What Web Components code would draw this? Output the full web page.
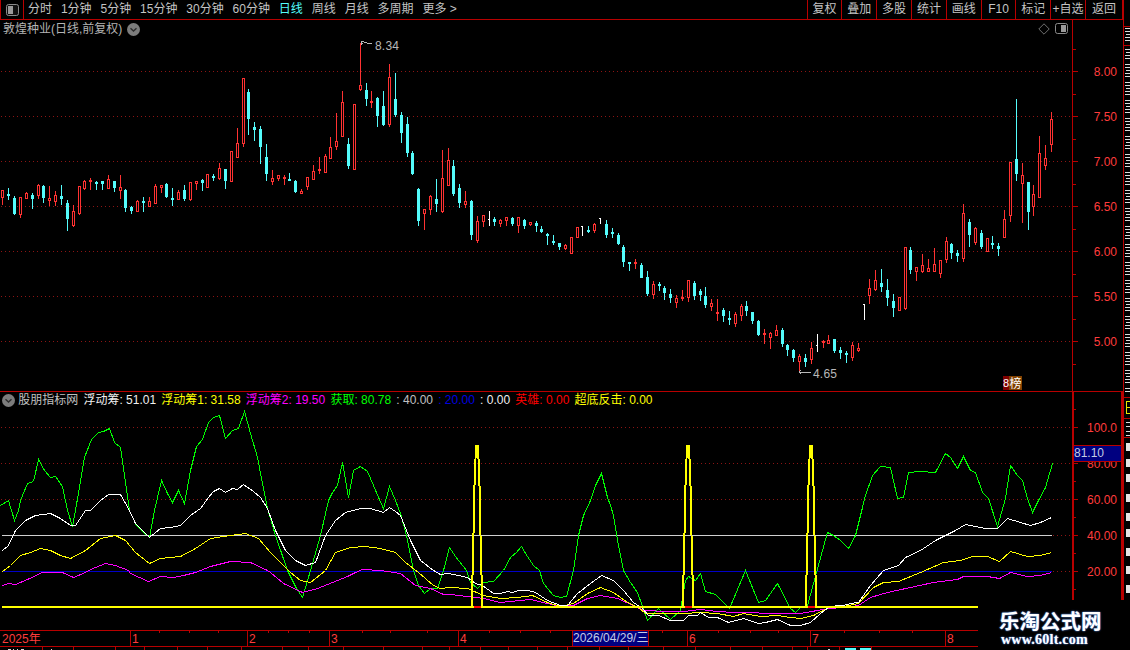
<!DOCTYPE html>
<html lang="zh">
<head>
<meta charset="utf-8">
<title>K线</title>
<style>
  html, body { margin: 0; background: #000; }
  body { overflow: hidden; font: 12px "Liberation Sans", "Noto Sans CJK SC", sans-serif; color: #c0c0c0; }
</style>
</head>
<body>
<kl-app>
  <kl-toolbar>
    <kl-period>分时</kl-period>
    <kl-period>1分钟</kl-period>
    <kl-period>5分钟</kl-period>
    <kl-period>15分钟</kl-period>
    <kl-period>30分钟</kl-period>
    <kl-period>60分钟</kl-period>
    <kl-period active>日线</kl-period>
    <kl-period>周线</kl-period>
    <kl-period>月线</kl-period>
    <kl-period>多周期</kl-period>
    <kl-period>更多 &gt;</kl-period>
    <kl-action slot="actions">复权</kl-action>
    <kl-action slot="actions">叠加</kl-action>
    <kl-action slot="actions">多股</kl-action>
    <kl-action slot="actions">统计</kl-action>
    <kl-action slot="actions">画线</kl-action>
    <kl-action slot="actions">F10</kl-action>
    <kl-action slot="actions">标记</kl-action>
    <kl-action slot="actions">+自选</kl-action>
    <kl-action slot="actions">返回</kl-action>
  </kl-toolbar>
  <kl-price-panel>敦煌种业(日线,前复权)</kl-price-panel>
  <kl-indicator-panel>
    <kl-legend color="#c0c0c0">股朋指标网</kl-legend>
    <kl-legend color="#f0f0f0">浮动筹: 51.01</kl-legend>
    <kl-legend color="#ffff00">浮动筹1: 31.58</kl-legend>
    <kl-legend color="#ff00ff">浮动筹2: 19.50</kl-legend>
    <kl-legend color="#00ff00">获取: 80.78</kl-legend>
    <kl-legend color="#c0c0c0">: 40.00</kl-legend>
    <kl-legend color="#0000e0">: 20.00</kl-legend>
    <kl-legend color="#f0f0f0">: 0.00</kl-legend>
    <kl-legend color="#ff0000">英雄: 0.00</kl-legend>
    <kl-legend color="#ffff00">超底反击: 0.00</kl-legend>
  </kl-indicator-panel>
  <kl-date-axis>2026/04/29/三</kl-date-axis>
  <kl-tab-row></kl-tab-row>
  <kl-side-column slot="side"></kl-side-column>
  <kl-watermark slot="mark">
    <span>乐淘公式网</span>
    <span slot="url">www.60lt.com</span>
  </kl-watermark>
</kl-app>

<script>
const SVG_NS = 'http://www.w3.org/2000/svg';
const LINE_RED = '#b80000';
const LABEL_RED = '#ff3c3c';
const CYAN = '#54fcfc';
const CANDLE_RED = '#ff3232';

/** small helper for svg nodes */
function el(name, attrs, text) {
    const node = document.createElementNS(SVG_NS, name);
    for (const key in attrs) node.setAttribute(key, attrs[key]);
    if (text !== undefined) node.textContent = text;
    return node;
}

/** svg canvas using page coordinates, so numbers below read like the screen */
function canvas(x, y, w, h) {
    const svg = el('svg', { width: w, height: h, viewBox: `${x} ${y} ${w} ${h}`, 'shape-rendering': 'crispEdges' });
    svg.style.display = 'block';
    return svg;
}

function px(svg, x, y, w, h, fill) {
    svg.append(el('rect', { x, y, width: w, height: h, fill }));
}

function dotted(svg, y, x1, x2) {
    for (let x = x1; x < x2; x += 4) px(svg, x, y, 1, 1, '#8c1414');
}

/* candles: [center, wick top, body top, body bottom, wick bottom, type], in 3x crop coordinates */
const CANDLE_SETS = [
    { ox: 0, oy: 60, rows: [
        [7,390,390,413,435,'r'],[25,384,402,408,420,'c'],[43,408,414,462,465,'c'],[61,411,411,464,474,'r'],
        [79,396,399,417,417,'r'],[97,400,405,417,447,'c'],[115,373,375,408,417,'r'],[130,376,378,414,429,'c'],
        [148,378,415,423,439,'r'],[166,393,405,426,438,'r'],[184,375,408,417,435,'c'],[202,420,429,477,513,'c'],
        [220,435,454,498,501,'r'],[238,378,378,462,465,'r'],[253,360,363,387,390,'r'],[271,354,360,366,390,'r'],
        [289,363,366,369,390,'c'],[307,363,363,372,390,'c'],[325,345,357,387,387,'r'],[343,363,363,384,396,'c'],
        [361,345,381,393,417,'r'],[376,387,390,444,456,'c'],[394,438,441,453,462,'c'],[412,420,423,456,456,'r'],
        [430,411,423,429,456,'c'],[448,411,423,441,441,'r'],[466,372,378,432,432,'r'],[484,375,376,384,399,'r'],
        [499,369,372,411,414,'c'],[517,384,414,417,438,'c'],[535,390,396,420,420,'r'],[553,375,390,417,423,'c'],
        [571,366,366,420,423,'r'],[589,363,363,372,390,'r'],[607,357,360,369,393,'c'],[622,342,342,384,384,'r'],
        [640,342,348,351,363,'c'],[658,309,324,357,360,'r'],[676,327,327,363,387,'c'],[694,273,273,366,366,'r'],
        [712,204,249,294,294,'r'],[730,54,54,251,261,'r'],[745,87,96,177,225,'c'],[763,186,201,210,243,'c'],
        [781,198,207,261,312,'c'],[799,252,291,342,363,'c'],[817,330,354,366,375,'r'],[835,345,345,357,363,'r'],
        [853,345,351,357,375,'r'],[868,339,357,360,363,'c'],[886,360,363,396,399,'c']
    ] },
    { ox: 300, oy: 30, rows: [
        [4,477,483,492,492,'r'],[22,441,441,471,480,'r'],[40,405,423,450,450,'r'],[58,381,417,423,432,'r'],
        [76,372,378,429,429,'r'],[91,321,351,387,387,'r'],[109,249,333,351,360,'r'],[127,183,216,321,321,'r'],
        [145,324,342,408,417,'c'],[163,222,222,420,420,'r'],[181,39,165,180,183,'r'],[199,159,180,207,228,'c'],
        [214,183,213,219,234,'r'],[232,201,204,258,291,'c'],[250,183,228,285,288,'c'],[268,102,141,285,291,'r'],
        [286,129,207,255,261,'c'],[304,246,255,309,339,'c'],[322,261,282,369,381,'c'],[337,363,369,432,435,'c'],
        [355,474,477,573,588,'c'],[373,537,537,552,600,'r'],[391,495,498,540,555,'r'],[409,447,507,522,546,'c'],
        [427,360,444,546,549,'r'],[445,354,390,468,468,'r'],[460,390,408,492,498,'c'],[478,462,474,519,534,'c'],
        [496,483,513,525,534,'r'],[514,510,513,615,630,'c'],[532,558,573,633,639,'r'],[550,555,555,576,591,'r'],
        [568,543,567,570,588,'w'],[583,561,567,576,588,'c'],[601,567,570,582,591,'r'],[619,561,561,573,588,'r'],
        [637,561,564,582,588,'c'],[655,561,561,588,609,'r'],[673,567,570,588,597,'c'],[691,576,576,585,588,'r'],
        [709,573,579,588,606,'c'],[724,588,597,606,609,'c'],[742,609,612,618,645,'c'],[760,615,633,636,645,'c'],
        [778,639,639,651,660,'c'],[796,642,645,657,660,'r'],[814,621,621,672,672,'r'],[832,591,591,624,624,'r'],
        [847,588,588,591,618,'w'],[865,588,600,603,609,'c'],[883,579,582,603,609,'r']
    ] },
    { ox: 600, oy: 210, rows: [
        [1,25,25,28,42,'w'],[19,30,42,75,84,'c'],[37,54,66,72,84,'c'],[55,69,75,102,105,'c'],[70,105,111,156,171,'c'],
        [88,156,156,159,183,'c'],[106,147,156,159,177,'r'],[124,159,165,204,204,'c'],[142,183,201,252,258,'c'],
        [160,213,222,255,267,'r'],[178,216,222,228,243,'c'],[193,228,234,249,270,'c'],[211,237,252,264,279,'c'],
        [229,255,264,279,294,'r'],[247,240,261,267,273,'r'],[265,210,210,264,276,'r'],[283,213,219,258,270,'c'],
        [301,237,243,255,273,'c'],[316,231,258,285,294,'c'],[334,267,279,291,303,'r'],[352,267,306,312,333,'r'],
        [370,294,300,318,336,'c'],[388,303,324,327,345,'c'],[406,306,312,342,351,'r'],[424,282,288,318,333,'r'],
        [439,273,288,303,318,'c'],[457,306,306,333,342,'c'],[475,330,333,375,378,'c'],[493,357,369,375,402,'r'],
        [511,366,369,384,417,'r'],[529,345,360,378,378,'r'],[547,354,360,402,411,'c'],[562,402,405,420,438,'c'],
        [580,417,420,444,456,'c'],[598,432,438,456,489,'r'],[616,432,444,456,471,'c'],[634,396,414,450,462,'r'],
        [652,372,405,408,426,'w'],[670,390,393,399,414,'r'],[685,375,390,402,402,'r'],[703,387,387,423,429,'c'],
        [721,411,420,429,447,'c'],[739,423,429,435,459,'c'],[757,396,405,444,453,'r'],[775,399,414,423,426,'r']
    ] },
    { ox: 850, oy: 90, rows: [
        [42,642,642,645,690,'w'],[58,567,594,618,642,'r'],[76,540,570,600,603,'r'],[94,537,579,591,606,'c'],
        [112,567,600,624,648,'c'],[130,612,633,654,681,'c'],[148,621,621,663,663,'r'],[166,471,471,657,660,'r'],
        [181,471,480,540,552,'c'],[199,531,531,546,573,'r'],[217,492,525,546,549,'r'],[235,507,534,546,546,'r'],
        [253,474,522,546,546,'r'],[271,510,510,552,564,'r'],[289,441,453,510,519,'r'],[304,459,462,489,507,'c'],
        [322,480,489,498,516,'c'],[340,342,369,507,516,'r'],[358,387,396,435,471,'c'],[376,411,414,459,465,'r'],
        [394,420,429,471,477,'c'],[412,444,444,486,486,'r'],[427,438,459,462,477,'c'],[445,459,468,477,498,'c'],
        [463,360,387,444,444,'r'],[481,216,216,378,396,'r'],[499,27,207,252,273,'c'],[517,219,255,282,399,'r'],
        [535,276,276,366,420,'c'],[550,285,312,351,378,'r'],[568,138,189,324,324,'r'],[586,165,204,228,240,'r'],
        [604,66,87,165,186,'r']
    ] }
];

/* indicator curves, page pixels */
const GREEN = [[0,505],[8,500],[14,520],[18,510],[20,500],[27,483],[33,481],[38,459],[44,470],[50,477],[55,476],[62,486],[67,510],[72,526],[75,510],[84,457],[91,439],[98,432],[103,431],[109,428],[114,442],[120,447],[129,510],[136,525],[149,537],[154,510],[161,480],[167,493],[172,502],[178,490],[184,503],[190,470],[196,446],[202,439],[208,422],[213,417],[219,415],[225,438],[232,430],[238,428],[244,411],[250,433],[257,457],[262,483],[267,508],[275,535],[287,570],[296,588],[302,597],[310,570],[320,535],[328,500],[332,492],[337,485],[342,462],[348,497],[353,470],[360,466],[367,471],[373,485],[378,497],[383,508],[389,486],[395,500],[400,513],[406,535],[413,570],[418,585],[424,593],[430,588],[437,588],[443,570],[449,547],[455,556],[466,570],[470,582],[477,588],[483,582],[493,581],[503,570],[510,557],[516,552],[521,546],[527,556],[533,565],[539,570],[543,583],[553,595],[560,597],[566,596],[573,570],[578,535],[583,515],[590,500],[595,485],[601,473],[607,497],[610,505],[613,515],[618,545],[623,570],[630,582],[637,592],[647,620],[658,608],[670,619],[680,610],[685,580],[688,576],[695,580],[700,573],[705,591],[715,594],[729,608],[745,570],[758,602],[765,600],[777,583],[790,608],[795,612],[800,607],[807,605],[822,550],[827,532],[833,535],[840,540],[848,548],[855,535],[865,495],[872,475],[880,466],[890,467],[897,498],[903,497],[908,472],[920,471],[935,472],[945,453],[950,457],[957,468],[963,456],[970,470],[975,472],[982,492],[988,498],[997,526],[1005,498],[1010,465],[1017,475],[1022,480],[1027,498],[1032,512],[1038,500],[1045,487],[1052,463]];
const WHITE = [[2,550],[8,545],[15,530],[25,520],[35,515],[50,513],[60,518],[70,525],[75,525],[85,510],[90,510],[100,500],[108,494],[120,494],[128,508],[135,523],[149,537],[160,528],[170,527],[180,525],[190,515],[200,508],[208,497],[213,491],[219,488],[225,492],[232,488],[237,489],[243,484],[253,491],[260,497],[267,508],[275,530],[285,550],[295,560],[305,565],[315,562],[325,535],[335,520],[345,512],[360,508],[370,508],[383,512],[389,507],[395,511],[400,515],[410,540],[420,560],[433,570],[440,574],[448,573],[458,575],[467,577],[475,583],[482,585],[493,593],[500,593],[507,591],[512,592],[518,590],[528,590],[535,592],[547,600],[560,605],[567,605],[577,593],[590,583],[601,575],[613,580],[623,590],[633,602],[642,608],[648,615],[658,615],[670,620],[683,620],[688,615],[697,615],[700,612],[708,617],[717,617],[728,622],[743,618],[758,623],[765,622],[777,619],[790,625],[800,625],[810,622],[820,613],[828,607],[837,605],[843,605],[850,603],[858,602],[870,585],[883,570],[898,565],[905,557],[920,550],[935,540],[945,535],[955,530],[965,524],[975,526],[985,528],[997,528],[1007,518],[1020,522],[1030,525],[1040,522],[1051,517]];
const YELLOW = [[2,571],[10,565],[20,555],[30,552],[40,548],[50,550],[60,555],[70,558],[85,550],[100,538],[115,535],[125,540],[135,552],[149,563],[160,558],[180,556],[195,548],[210,538],[230,535],[245,533],[258,538],[270,552],[290,572],[300,580],[310,582],[325,570],[335,552],[350,547],[365,546],[380,548],[395,552],[405,562],[418,572],[433,585],[440,588],[450,587],[467,588],[483,595],[500,598],[517,597],[532,595],[547,602],[560,606],[573,603],[587,593],[600,587],[613,592],[627,602],[638,607],[645,613],[667,613],[683,613],[700,612],[717,613],[733,616],[743,613],[760,616],[777,615],[790,617],[800,618],[813,615],[828,607],[843,606],[858,603],[873,587],[883,582],[898,581],[920,572],[943,562],[960,560],[972,556],[987,556],[999,561],[1010,551],[1027,556],[1040,555],[1051,552]];
const MAGENTA = [[2,585],[8,583],[15,584],[27,579],[42,572],[52,572],[62,572],[73,577],[85,572],[90,569],[105,563],[115,565],[128,570],[130,573],[148,581],[160,576],[173,577],[183,575],[195,572],[210,566],[230,561],[250,562],[267,570],[270,572],[283,583],[302,592],[317,588],[337,580],[347,576],[355,572],[362,569],[380,570],[400,573],[415,585],[430,588],[443,594],[450,594],[467,596],[483,598],[500,602],[530,599],[547,603],[560,606],[573,605],[587,598],[600,595],[617,598],[633,605],[643,610],[667,611],[683,611],[700,609],[717,611],[733,612],[750,612],[767,613],[790,613],[800,613],[828,608],[843,607],[858,605],[870,597],[887,592],[910,587],[933,582],[957,579],[963,576],[987,576],[999,578],[1010,572],[1027,576],[1040,575],[1051,572]];
const SPIKES = [477, 688, 811];

class KlApp extends HTMLElement {
    connectedCallback() {
        this.attachShadow({ mode: 'open' }).innerHTML = `
            <style>
                :host { display: grid; grid-template-columns: 1123px 7px; width: 1130px; height: 650px; position: relative; overflow: hidden; background: #000; }
                .main { display: flex; flex-direction: column; min-width: 0; }
                .mark { position: absolute; right: 0; bottom: 0; }
            </style>
            <div class="main"><slot></slot></div>
            <slot name="side"></slot>
            <div class="mark"><slot name="mark"></slot></div>
        `;
    }
}

class KlToolbar extends HTMLElement {
    connectedCallback() {
        this.attachShadow({ mode: 'open' }).innerHTML = `
            <style>
                :host { display: flex; height: 19px; border-bottom: 1px solid ${LINE_RED}; box-sizing: content-box; }
                .home { flex: 0 0 22px; border: solid ${LINE_RED}; border-width: 0 1px; margin-right: 4px; display: flex; align-items: center; justify-content: center; }
                .periods { display: flex; gap: 8.9px; align-items: center; flex: 1; }
                .actions { display: flex; border-right: 1px solid ${LINE_RED}; }
            </style>
            <div class="home">
                <svg width="13" height="12" viewBox="0 0 13 12">
                    <rect x=".5" y=".5" width="12" height="11" rx="2" fill="#111" stroke="#8a8a8a"/>
                    <rect x="2" y="2" width="5" height="8" fill="#9a9a9a"/>
                </svg>
            </div>
            <div class="periods"><slot></slot></div>
            <div class="actions"><slot name="actions"></slot></div>
        `;
    }
}

class KlPeriod extends HTMLElement {
    connectedCallback() {
        this.attachShadow({ mode: 'open' }).innerHTML = `
            <style>
                :host { display: block; color: #c4c4c4; white-space: nowrap; line-height: 19px; }
                :host([active]) { color: ${CYAN}; }
            </style>
            <slot></slot>
        `;
    }
}

class KlAction extends HTMLElement {
    connectedCallback() {
        this.attachShadow({ mode: 'open' }).innerHTML = `
            <style>
                :host { display: block; width: 34.8px; box-sizing: border-box; border-left: 1px solid ${LINE_RED}; color: #c4c4c4; text-align: center; line-height: 19px; white-space: nowrap; }
                :host(:last-child) { width: 37px; }
            </style>
            <slot></slot>
        `;
    }
}

class KlPricePanel extends HTMLElement {
    connectedCallback() {
        const root = this.attachShadow({ mode: 'open' });
        root.innerHTML = `
            <style>
                :host { display: grid; grid-template-columns: 1072px 51px; height: 371px; border-bottom: 1px solid ${LINE_RED}; position: relative; }
                .title { position: absolute; left: 3px; top: 2px; display: flex; gap: 5px; align-items: center; color: #b4b4b4; line-height: 15px; }
                .tools { position: absolute; left: 1038px; top: 3px; display: flex; gap: 5px; align-items: center; }
                .axis { border-left: 1px solid ${LINE_RED}; }
                svg text { font: 12px "Liberation Sans", sans-serif; }
            </style>
            <div class="chart"></div>
            <div class="axis"></div>
            <div class="title">
                <slot></slot>
                <svg width="13" height="13" viewBox="0 0 13 13"><circle cx="6.5" cy="6.5" r="6.5" fill="#7c7c7c"/><path d="M3.5 5.2 6.5 8 9.5 5.2" fill="none" stroke="#2c2c2c" stroke-width="1.4"/></svg>
            </div>
            <div class="tools">
                <svg width="12" height="12" viewBox="0 0 12 12"><path d="M6 .8 11.2 6 6 11.2 .8 6Z" fill="none" stroke="#6e6e6e"/></svg>
                <svg width="13" height="12" viewBox="0 0 13 12"><rect x=".5" y=".5" width="12" height="10" rx="2" fill="none" stroke="#8a8a8a"/><rect x="6" y="2" width="5" height="7" fill="#9a9a9a"/></svg>
            </div>
        `;
        const svg = canvas(0, 20, 1072, 371);
        [71, 116, 161, 206, 251, 296, 341].forEach(y => dotted(svg, y, 1, 1072));

        for (const set of CANDLE_SETS) {
            for (const [c, wt, bt, bb, wb, type] of set.rows) {
                const x = Math.floor(set.ox + c / 3);
                const Y = v => Math.round(set.oy + v / 3);
                const color = type === 'r' ? CANDLE_RED : type === 'c' ? CYAN : '#fff';
                px(svg, x, Y(wt), 1, Math.max(1, Y(wb) - Y(wt)), color);
                if (type === 'w') {
                    px(svg, x - 1, Y(bt), 1, 1, color);
                    continue;
                }
                const h = Math.max(2, Y(bb) - Y(bt));
                px(svg, x - 1, Y(bt), 3, h, color);
                if (type === 'r' && h > 2) px(svg, x, Y(bt) + 1, 1, h - 2, '#000');
            }
        }

        const note = '#b8b8b8';
        const hi = el('path', { d: 'M361 41h3M361 41v4M361 43h2M364 42l3 1 3 0 2 1', fill: 'none', stroke: note });
        const lo = el('path', { d: 'M799 372h12M799 372l2 -2M799 372l2 2', fill: 'none', stroke: note });
        svg.append(hi, lo);
        svg.append(el('text', { x: 375, y: 50, fill: note, 'letter-spacing': '0.2' }, '8.34'));
        svg.append(el('text', { x: 813, y: 378, fill: note, 'letter-spacing': '0.2' }, '4.65'));

        // ranking badge
        px(svg, 1003, 376, 6, 14, '#800000');
        px(svg, 1009, 376, 13, 14, '#804000');
        svg.append(el('text', { x: 1003, y: 387, fill: '#fff', style: 'font-family:"Liberation Sans";font-size:11px' }, '8'));
        svg.append(el('text', { x: 1009.5, y: 387.5, fill: '#fff', style: 'font-family:"Noto Sans CJK SC";font-size:12px' }, '榜'));
        root.querySelector('.chart').append(svg);

        const axis = canvas(1073, 20, 50, 371);
        [71, 116, 161, 206, 251, 296, 341].forEach((y, i) => {
            px(axis, 1073, y, 5, 1, LINE_RED);
            axis.append(el('text', { x: 1117, y: y + 4.5, fill: LABEL_RED, 'text-anchor': 'end' }, (8 - i * 0.5).toFixed(2)));
        });
        [49, 94, 139, 184, 229, 274, 319, 364].forEach(y => px(axis, 1073, y, 3, 1, LINE_RED));
        root.querySelector('.axis').append(axis);
    }
}

class KlIndicatorPanel extends HTMLElement {
    connectedCallback() {
        const root = this.attachShadow({ mode: 'open' });
        root.innerHTML = `
            <style>
                :host { display: grid; grid-template-columns: 1072px 51px; height: 238px; position: relative; }
                .legend { position: absolute; left: 2px; top: 1px; display: flex; gap: 5.2px; align-items: center; height: 15px; }
                .legend svg { margin-right: -2px; }
                .axis { border: solid ${LINE_RED}; border-width: 0 2px; box-sizing: border-box; position: relative; }
                .value { position: absolute; left: 0; right: 0; top: 53px; height: 15px; background: #000080; border: solid ${LINE_RED}; border-width: 1px 0; color: #c4cce4; line-height: 15px; }
                svg text { font: 12px "Liberation Sans", sans-serif; }
            </style>
            <div class="chart"></div>
            <div class="axis"><div class="value">81.10</div></div>
            <div class="legend">
                <svg width="13" height="13" viewBox="0 0 13 13"><circle cx="6.5" cy="6.5" r="6.5" fill="#7c7c7c"/><path d="M3.5 5.2 6.5 8 9.5 5.2" fill="none" stroke="#2c2c2c" stroke-width="1.4"/></svg>
                <slot></slot>
            </div>
        `;
        const svg = canvas(0, 392, 1072, 238);
        [427, 463, 499].forEach(y => dotted(svg, y, 1, 1072));
        [535, 571].forEach(y => dotted(svg, y, 1053, 1072));
        px(svg, 2, 535, 1050, 1, '#d0d0d0');
        px(svg, 2, 571, 1050, 1, '#0000c8');

        // half pixel shift keeps the aliased curves one pixel wide
        const line = (pts, color) => svg.append(el('polyline', {
            points: pts.map(([x, y]) => `${x + .5},${y + .5}`).join(' '), fill: 'none', stroke: color, 'stroke-width': 1
        }));
        line(GREEN, '#00ff00');
        line(MAGENTA, '#ff00ff');
        line(YELLOW, '#ffff00');
        line(WHITE, '#ffffff');

        // heavy signal line with its spikes
        px(svg, 2, 606, 1050, 2, '#ffff00');
        for (const c of SPIKES) {
            px(svg, c - 3, 606, 7, 2, '#ff0000');
            const steps = [[-5,607],[-5,580],[-4,570],[-3,499],[-2,472],[-1,446],[1,446],[2,472],[3,499],[4,570],[5,580],[5,607]];
            svg.append(el('polyline', {
                points: steps.map(([dx, y]) => `${c + dx},${y}`).join(' '),
                fill: 'none', stroke: '#ffff00', 'stroke-width': 2
            }));
        }
        root.querySelector('.chart').append(svg);

        const axis = canvas(1074, 392, 47, 238);
        [[427,'100.0'],[463,'80.00'],[499,'60.00'],[535,'40.00'],[571,'20.00']].forEach(([y, t]) => {
            px(axis, 1074, y, 4, 1, LINE_RED);
            axis.append(el('text', { x: 1117, y: y + 4.5, fill: LABEL_RED, 'text-anchor': 'end' }, t));
        });
        [409, 445, 481, 517, 553, 589].forEach(y => px(axis, 1074, y, 2, 1, LINE_RED));
        const holder = root.querySelector('.axis');
        holder.insertBefore(axis, holder.firstChild);
    }
}

class KlLegend extends HTMLElement {
    connectedCallback() {
        this.attachShadow({ mode: 'open' }).innerHTML = `
            <style>:host { display: block; white-space: nowrap; line-height: 15px; color: ${this.getAttribute('color')}; }</style>
            <slot></slot>
        `;
    }
}

class KlDateAxis extends HTMLElement {
    connectedCallback() {
        const root = this.attachShadow({ mode: 'open' });
        root.innerHTML = `
            <style>
                :host { display: block; height: 15px; border: solid ${LINE_RED}; border-width: 1px 0; position: relative; }
                svg text { font: 12px "Liberation Sans", "Noto Sans CJK SC", sans-serif; }
                .cursor { position: absolute; left: 572px; top: 0; width: 77px; height: 15px; box-sizing: border-box; background: #000080; border: solid ${LINE_RED}; border-width: 0 1px; color: #c4cce4; line-height: 15px; text-align: center; white-space: nowrap; }
            </style>
            <div class="cursor"><slot></slot></div>
        `;
        const svg = canvas(0, 631, 1123, 15);
        [[130,'1'],[247,'2'],[329,'3'],[458,'4'],[687,'6'],[810,'7'],[945,'8']].forEach(([x, t]) => {
            px(svg, x, 631, 1, 15, LINE_RED);
            svg.append(el('text', { x: x + 2, y: 643, fill: LABEL_RED }, t));
        });
        svg.append(el('text', { x: 2, y: 643, fill: LABEL_RED }, '2025年'));
        [159,189,218,268,288,309,362,390,427,489,520,550,662,718,750,778,844,879,912].forEach(x => px(svg, x, 631, 1, 2, LINE_RED));
        root.prepend(svg);
    }
}

class KlTabRow extends HTMLElement {
    connectedCallback() {
        const root = this.attachShadow({ mode: 'open' });
        root.innerHTML = `<style>:host { display: block; height: 3px; overflow: hidden; }</style>`;
        const svg = canvas(0, 647, 1123, 3);
        [42,73,115,144,177,207,241,282,308,343,383,422,449,480,508,537,567,599,628,663,695,730,762,792,807,839,871].forEach(x => px(svg, x, 647, 1, 3, LINE_RED));
        [[8,3],[13,1],[17,1],[21,3],[51,1]].forEach(([x, w]) => px(svg, x, 649, w, 1, '#d8d8d8'));
        px(svg, 828, 649, 2, 1, '#d8d8d8');
        px(svg, 845, 648, 11, 2, CYAN);
        px(svg, 860, 648, 11, 2, CYAN);
        root.append(svg);
    }
}

class KlSideColumn extends HTMLElement {
    connectedCallback() {
        const root = this.attachShadow({ mode: 'open' });
        root.innerHTML = `<style>:host { display: block; width: 7px; height: 650px; }</style>`;
        const svg = canvas(1123, 0, 7, 650);
        px(svg, 1123, 0, 1, 391, LINE_RED);
        px(svg, 1123, 391, 1, 259, LINE_RED);
        [26, 45, 397, 418, 437].forEach(y => px(svg, 1123, y, 7, 1, LINE_RED));
        // clipped edge of the quote list
        let row = 0;
        for (let y = 28; y < 392; y += 3) {
            row++;
            if (y === 46 || row % 6 === 0) continue;
            px(svg, 1125 + (row % 3 === 0 ? 1 : 0), y, 5, 1, '#dcdcdc');
        }
        px(svg, 1126, 401, 4, 1, '#e8e800');
        px(svg, 1126, 401, 1, 13, '#e8e800');
        px(svg, 1126, 407, 4, 1, '#e8e800');
        px(svg, 1126, 413, 4, 1, '#e8e800');
        [422, 426, 431, 435].forEach(y => px(svg, 1126, y, 4, 1, '#dcdcdc'));
        [447, 463, 478, 498, 517, 533, 552, 570, 589].forEach(y => px(svg, 1126, y - 4, 4, 8, '#e4e4e4'));
        root.append(svg);
    }
}

class KlWatermark extends HTMLElement {
    connectedCallback() {
        this.attachShadow({ mode: 'open' }).innerHTML = `
            <style>
                :host { display: flex; flex-direction: column; width: 152px; height: 50px; box-sizing: border-box; padding: 8px 0 0 21px; background: #000; color: #fff; text-shadow: 0 0 2px #4f7fd0, 0 0 1px #4f7fd0; }
                .name { font: bold 20.5px/24px "Noto Sans CJK SC", sans-serif; white-space: nowrap; }
                .url { font: bold 14px/15px "Liberation Serif", serif; margin-left: 2px; letter-spacing: .25px; }
            </style>
            <div class="name"><slot></slot></div>
            <div class="url"><slot name="url"></slot></div>
        `;
    }
}

customElements.define('kl-app', KlApp);
customElements.define('kl-toolbar', KlToolbar);
customElements.define('kl-period', KlPeriod);
customElements.define('kl-action', KlAction);
customElements.define('kl-price-panel', KlPricePanel);
customElements.define('kl-indicator-panel', KlIndicatorPanel);
customElements.define('kl-legend', KlLegend);
customElements.define('kl-date-axis', KlDateAxis);
customElements.define('kl-tab-row', KlTabRow);
customElements.define('kl-side-column', KlSideColumn);
customElements.define('kl-watermark', KlWatermark);
</script>
</body>
</html>
